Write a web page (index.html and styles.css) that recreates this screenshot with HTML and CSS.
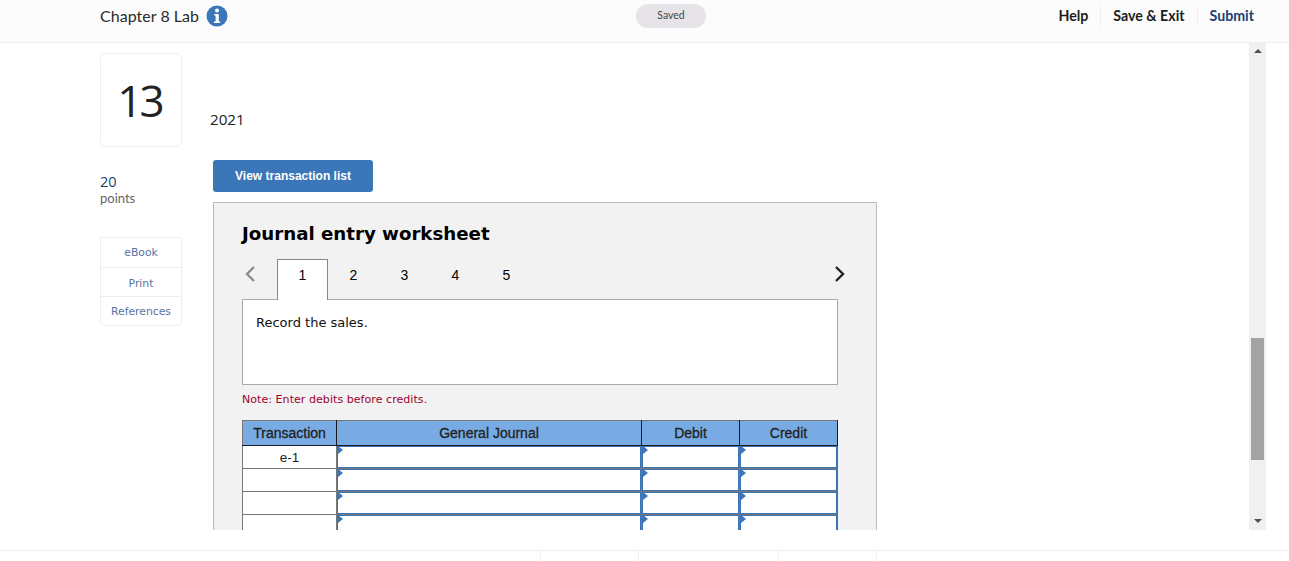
FILE: index.html
```html
<!DOCTYPE html>
<html lang="en">
<head>
<meta charset="utf-8">
<title>Chapter 8 Lab</title>
<link rel="stylesheet" href="styles.css">
</head>
<body>
<header class="topbar">
  <div class="title-group">
    <span class="title">Chapter 8 Lab</span>
    <svg class="info" viewBox="0 0 22 22" width="22" height="22" aria-hidden="true">
      <circle cx="11" cy="11" r="10.5" fill="#3b76b8"/>
      <circle cx="11" cy="5.6" r="2" fill="#fff"/>
      <path d="M8.2 9h4.6v7.6h1.4V18H8V16.6h1.6V10.4H8.2z" fill="#fff"/>
    </svg>
  </div>
  <div class="saved">Saved</div>
  <nav class="actions">
    <a class="action">Help</a>
    <a class="action">Save &amp; Exit</a>
    <a class="action submit">Submit</a>
  </nav>
</header>
<div class="viewport">
  <main class="scroll-content">
    <aside class="side">
      <div class="qnum">13</div>
      <div class="points"><span class="points-value">20</span><span class="points-label">points</span></div>
      <ul class="links">
        <li>eBook</li>
        <li>Print</li>
        <li>References</li>
      </ul>
    </aside>
    <section class="question">
      <p class="year">2021</p>
      <button class="view-btn">View transaction list</button>
      <div class="panel">
        <h2 class="panel-title">Journal entry worksheet</h2>
        <div class="tabs">
          <svg class="chev" viewBox="0 0 12 18" width="12" height="18" aria-hidden="true"><path d="M10 2 3 9l7 7" fill="none" stroke="#8c8c8c" stroke-width="2.4"/></svg>
          <div class="tab active">1</div>
          <div class="tab">2</div>
          <div class="tab">3</div>
          <div class="tab">4</div>
          <div class="tab">5</div>
          <svg class="chev next" viewBox="0 0 12 18" width="12" height="18" aria-hidden="true"><path d="M2 2l7 7-7 7" fill="none" stroke="#222" stroke-width="2.4"/></svg>
        </div>
        <div class="prompt">Record the sales.</div>
        <p class="note">Note: Enter debits before credits.</p>
        <table class="journal">
          <colgroup><col class="c1"><col class="c2"><col class="c3"><col class="c4"></colgroup>
          <thead>
            <tr><th>Transaction</th><th>General Journal</th><th>Debit</th><th>Credit</th></tr>
          </thead>
          <tbody>
            <tr><td class="tx">e-1</td><td class="in"></td><td class="in"></td><td class="in"></td></tr>
            <tr><td class="tx"></td><td class="in"></td><td class="in"></td><td class="in"></td></tr>
            <tr><td class="tx"></td><td class="in"></td><td class="in"></td><td class="in"></td></tr>
            <tr><td class="tx"></td><td class="in"></td><td class="in"></td><td class="in"></td></tr>
            <tr><td class="tx"></td><td class="in"></td><td class="in"></td><td class="in"></td></tr>
          </tbody>
        </table>
      </div>
    </section>
  </main>
  <div class="scrollbar">
    <span class="arrow up"></span>
    <span class="thumb"></span>
    <span class="arrow down"></span>
  </div>
</div>
<footer class="bottombar">
  <span class="tick"></span><span class="tick"></span><span class="tick"></span><span class="tick"></span>
</footer>
</body>
</html>
```
FILE: styles.css
```css
* { box-sizing: border-box; }
html, body { margin: 0; padding: 0; }
body { width: 1289px; height: 561px; overflow: hidden; background: #fff; font-family: Lato, "Open Sans", sans-serif; color: #222; }

.topbar { height: 43px; background: #fcfcfc; border-bottom: 1px solid #eeeeee; display: grid; grid-template-columns: 1fr auto 1fr; padding: 0 35px 0 100px; }
.title-group { display: flex; align-items: center; gap: 6.5px; height: 31px; }
.title { font-size: 16px; color: #2b2b2b; letter-spacing: .03px; }
.info { display: block; }
.saved { width: 70px; height: 24px; margin: 4px 0 0 -12px; background: #e6e4e8; border-radius: 12px; font-size: 10.5px; color: #444; text-align: center; line-height: 23px; }
.actions { display: flex; justify-content: flex-end; height: 20px; margin-top: 6px; }
.action { font-size: 14.2px; font-weight: 700; color: #1c1c1c; padding: 0 12px; line-height: 19px; border-left: 1px solid #eeeeee; }
.action:first-child { border-left: 0; }
.action.submit { color: #1d3f73; padding-right: 0; }

.viewport { height: 487px; display: flex; padding-right: 23px; }
.scroll-content { flex: 1; overflow: hidden; display: flex; padding-left: 100px; }
.side { width: 82px; flex: none; padding-top: 10px; }
.qnum { height: 94px; padding-right: 3px; border: 1px solid #eeeeee; border-radius: 6px; font-family: "Open Sans", sans-serif; font-weight: 400; font-size: 44px; letter-spacing: -3px; line-height: 93px; text-align: center; color: #222; }
.points { margin-top: 26px; display: flex; flex-direction: column; }
.points-value { font-family: "Open Sans", sans-serif; font-size: 14.5px; line-height: 17px; color: #1d3f6e; }
.points-label { margin-top: 1px; font-size: 13px; line-height: 15px; color: #666; }
.links { list-style: none; margin: 31px 0 0; padding: 0; width: 82px; border: 1px solid #eeeeee; border-radius: 0 0 5px 5px; }
.links li { height: 30px; line-height: 29px; text-align: center; font-family: "DejaVu Sans", sans-serif; font-size: 10.8px; color: #56749f; border-bottom: 1px solid #eeeeee; }
.links li:nth-child(2) { height: 29px; line-height: 31px; }
.links li:last-child { height: 28px; border-bottom: 0; }

.question { margin-left: 28px; flex: none; width: 700px; }
.year { margin: 0; padding-top: 67px; font-family: "Open Sans", sans-serif; font-size: 15.2px; line-height: 19px; color: #222; }
.view-btn { display: block; margin: 31px 0 0 3px; width: 160px; height: 32px; padding: 0; border: 0; border-radius: 3px; background: #3b76b8; color: #fff; font-family: "Liberation Sans", Arial, sans-serif; font-weight: 700; font-size: 12px; }
.panel { margin: 10px 0 0 3px; width: 664px; border: 1px solid #bbbbbb; background: #f2f2f2; padding: 19px 38px 30px 28px; font-family: "DejaVu Sans", Verdana, sans-serif; }
.panel-title { margin: 0; font-size: 18.2px; line-height: 24px; font-weight: 700; color: #000; }
.tabs { display: flex; height: 41px; margin-top: 13px; position: relative; z-index: 1; }
.chev { margin: 6px 0 0 2px; }
.tab { width: 51px; text-align: center; font-family: "Liberation Sans", Arial, sans-serif; font-size: 14px; line-height: 33px; color: #000; }
.tab.active { background: #fff; border: 1px solid #888888; border-bottom: 0; margin-left: 21px; height: 41px; line-height: 31px; }
.chev.next { margin: 6px -8px 0 auto; }
.prompt { height: 86px; margin-top: -1px; border: 1px solid #aaaaaa; background: #fff; padding: 14px 13px; font-size: 13px; line-height: 17px; color: #111; }
.note { margin: 8px 0 0; font-size: 11px; line-height: 14px; letter-spacing: .06px; color: #a0002c; }
.journal { margin-top: 13px; width: 595px; table-layout: fixed; border-collapse: collapse; font-family: "Liberation Sans", Arial, sans-serif; }
.c1 { width: 94px; } .c2 { width: 305px; } .c3 { width: 98px; } .c4 { width: 98px; }
.journal th { height: 25px; padding: 0; background: #78abe4; border: 1px solid #1b1b1b; border-top-color: #777777; border-left-color: #1b1b1b; font-size: 14px; font-weight: 400; -webkit-text-stroke: .3px #222; color: #222; }
.journal th:first-child { border-left-color: #777777; }
.journal td { height: 23px; padding: 0; }
.tx { background: #fff; border: 1px solid #777777; text-align: center; font-size: 13.5px; color: #222; }
.in { position: relative; background: #fff; border: 1px solid #777777; box-shadow: inset 1px 0 0 #3b73b5, inset -1px 0 0 #3b73b5, inset 0 1px 0 #3b73b5, inset 0 -1px 0 #3b73b5; }
.in:last-child { border-right-color: #3b73b5; }
.in::before { content: ""; position: absolute; left: 1px; top: 0; border-left: 5px solid #3b76b8; border-top: 4px solid transparent; border-bottom: 4px solid transparent; }
tbody tr:first-child .in { border-top-color: #1b1b1b; }

.scrollbar { width: 17px; flex: none; background: #f0f0f0; position: relative; display: flex; flex-direction: column; align-items: center; }
.arrow { position: absolute; left: 5px; width: 0; height: 0; border-left: 4px solid transparent; border-right: 4px solid transparent; }
.arrow.up { top: 6px; border-bottom: 4px solid #505050; }
.arrow.down { bottom: 7px; border-top: 4px solid #505050; }
.thumb { position: absolute; top: 295px; left: 2px; width: 13px; height: 122px; background: #a3a3a3; }

.bottombar { margin-top: 20px; height: 11px; border-top: 1px solid #eeeeee; display: flex; padding-left: 540px; }
.tick { width: 98px; height: 10px; border-left: 1px solid #f0f0f0; }
.tick:nth-child(2) { width: 140px; }
```
